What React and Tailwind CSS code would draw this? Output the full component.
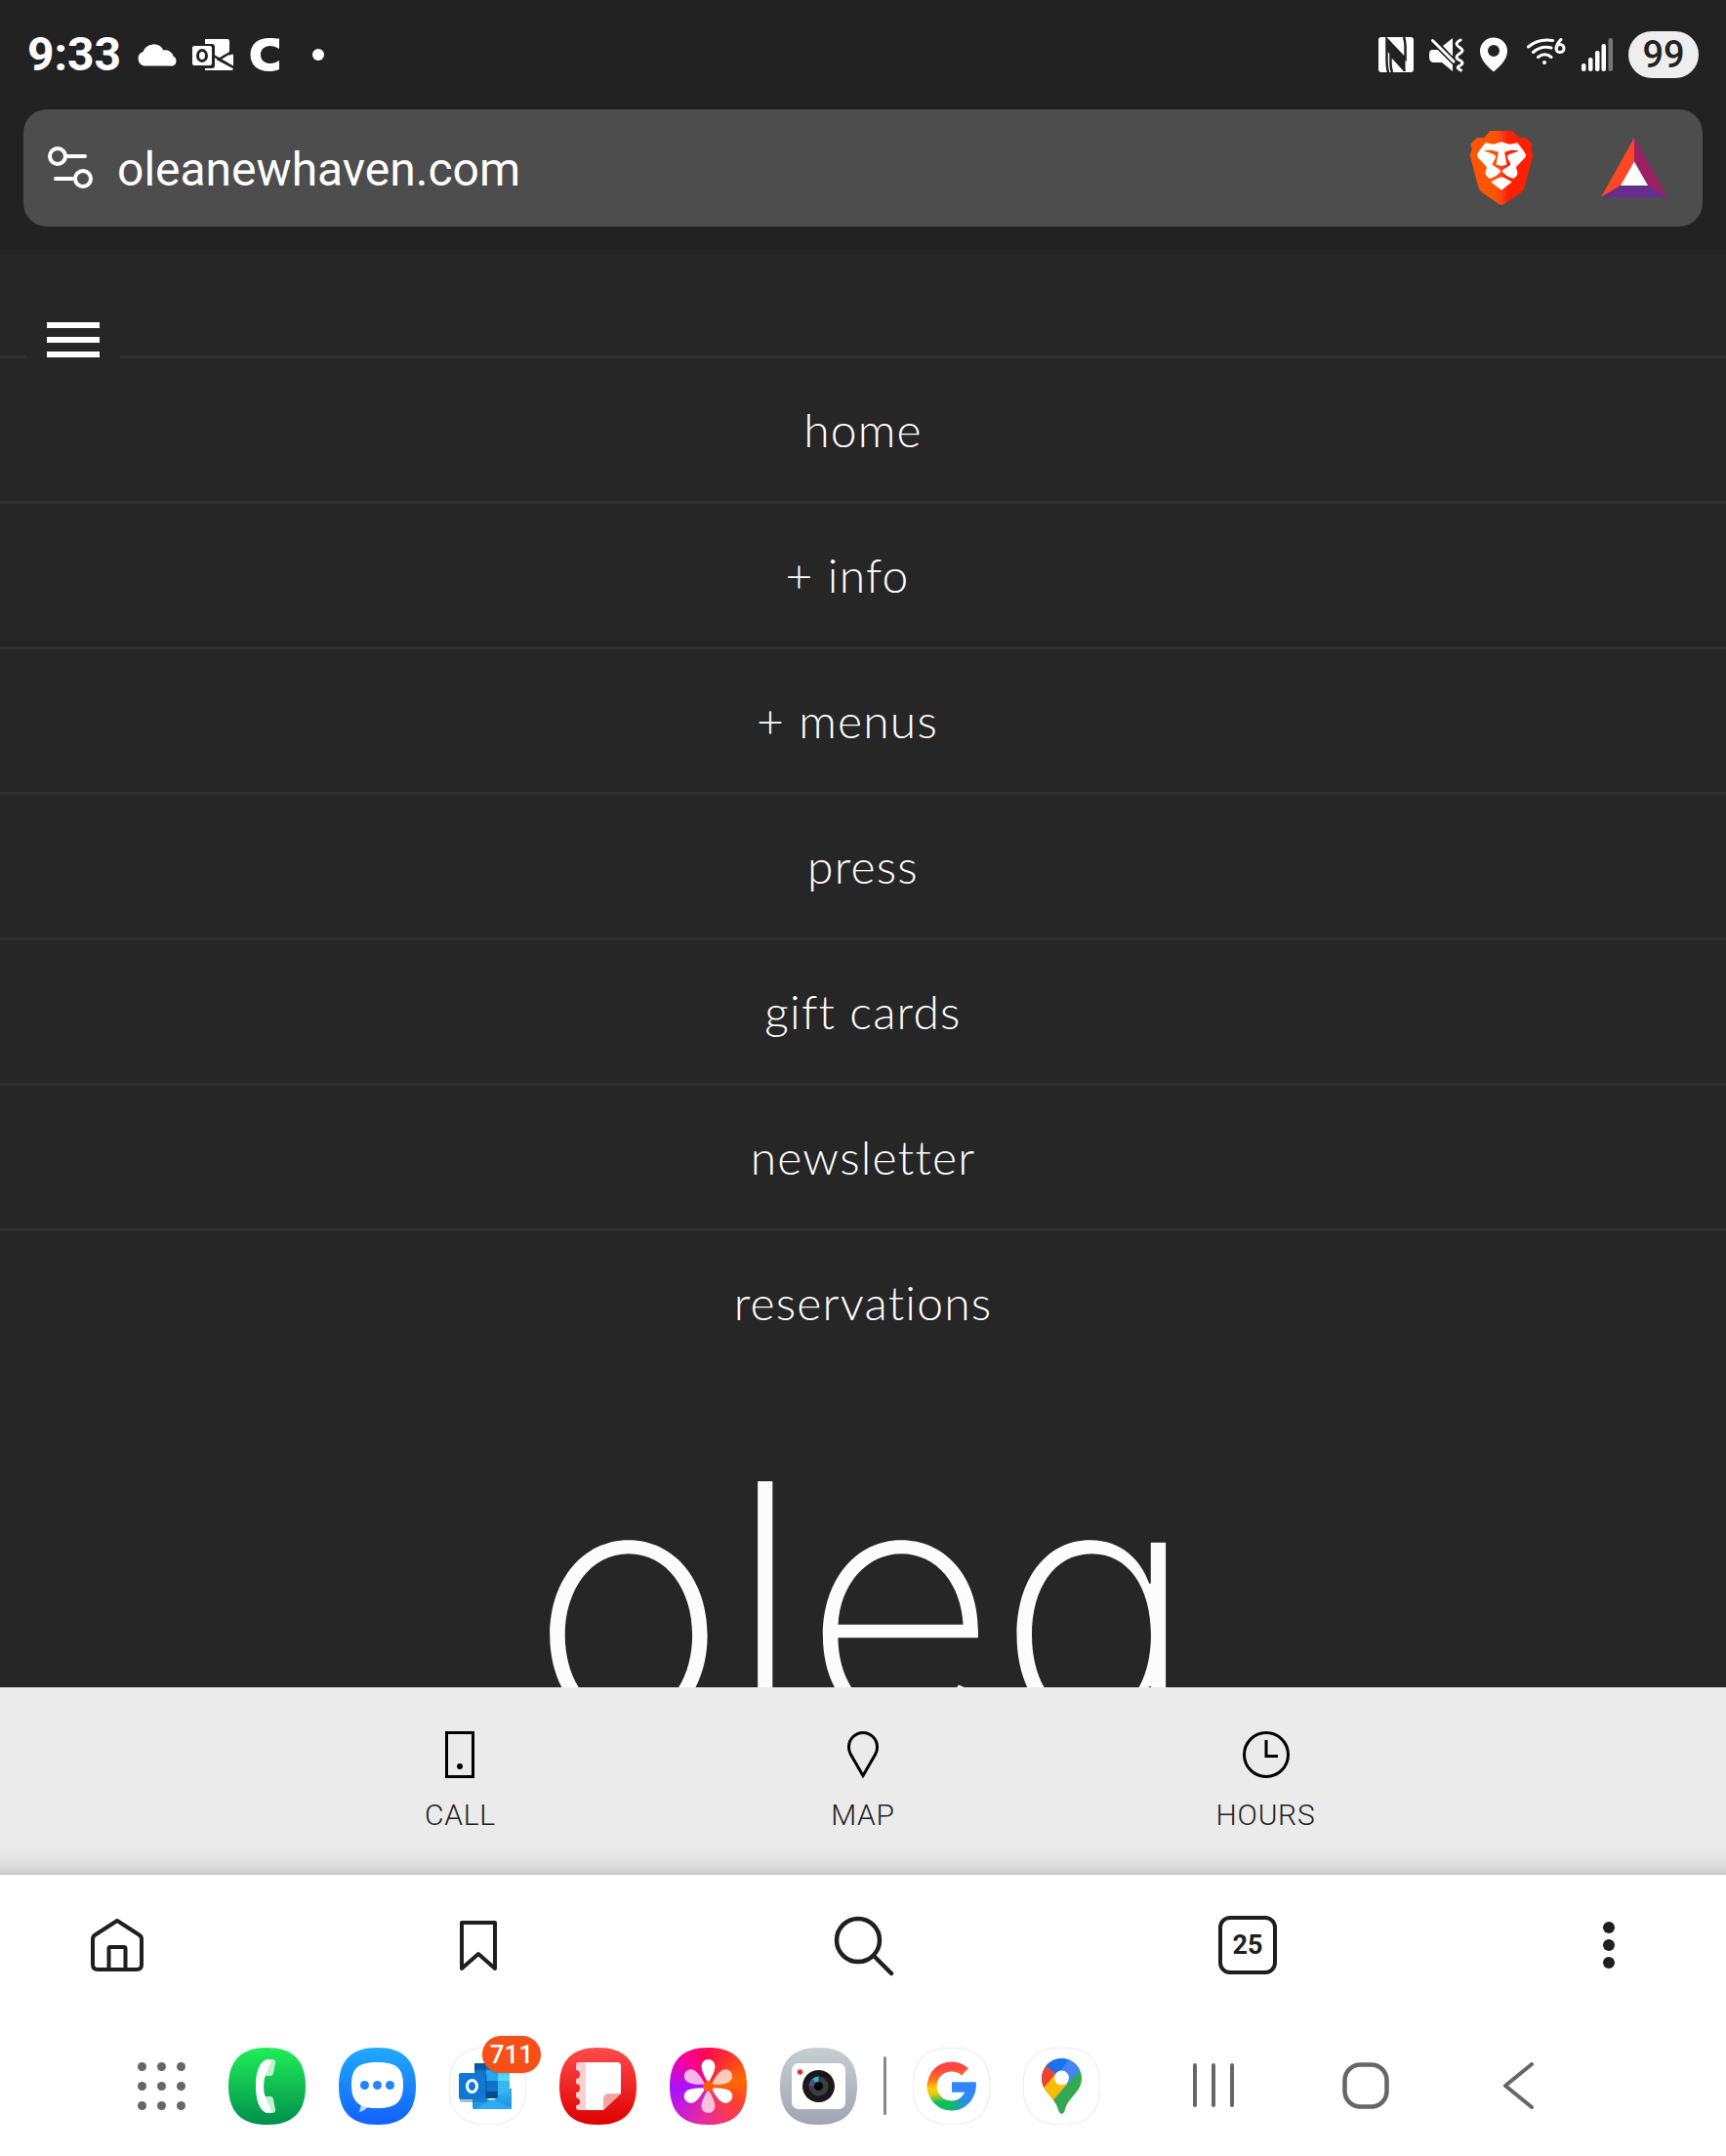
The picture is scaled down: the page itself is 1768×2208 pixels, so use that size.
import React from "react";
import { SiBrave } from "react-icons/si";

const SQUIRCLE = "M39.5 0C66 0 79 13 79 39.5S66 79 39.5 79 0 66 0 39.5 13 0 39.5 0Z";

/* ---------- status bar ---------- */

function StatusBar() {
  return (
    <header className="flex h-28 items-center justify-between px-7 text-white">
      <div className="flex items-center">
        <time className="font-[Roboto,sans-serif] text-[48px] leading-none font-bold">9:33</time>
        <svg className="ml-4 h-6 w-11" viewBox="0 0 44 24" fill="#fff" aria-label="Cloud">
          <path d="M8 23.500A7.500 7.500 0 0 1 6.500 9 11.500 11.500 0 0 1 27.500 7.500 8.500 8.500 0 0 1 37.500 13.500 5.500 5.500 0 0 1 37 23.500Z" />
        </svg>
        <svg className="ml-3 h-9 w-11" viewBox="0 0 44 36" aria-label="Outlook">
          <path d="M14 2h23q2 0 2 2v12l4 2v14q0 2-2 2H14Z" fill="#fff" />
          <path d="M43 14 28 23 43 31M21 18 44 31.500" stroke="#222" strokeWidth="2.500" fill="none" />
          <path d="M39 2h5v14l-5 3Z" fill="#222" />
          <rect x="-1" y="7" width="25" height="25" rx="3" fill="#222" />
          <rect x="1" y="9" width="20" height="20" rx="2" fill="#fff" />
          <ellipse cx="11" cy="19" rx="4.500" ry="5.500" fill="none" stroke="#222" strokeWidth="3" />
        </svg>
        <svg className="ml-4 h-9 w-8" viewBox="0 0 32 36" aria-label="C">
          <path d="M30 1.500V12C27 10 23.500 9 20.500 9 15 9 11 12.500 11 18s4 9 9.500 9c3.500 0 6.500-1 9.500-3V33c-3 1.500-7 2-10.500 2C8 35 0.500 28.500 0.500 18S8 1 19.500 1c4 0 7.500 .5 10.500 .5Z" fill="#fff" />
        </svg>
        <span className="ml-8 size-3 rounded-full bg-white" />
      </div>
      <div className="flex items-center gap-4">
        <svg className="size-9" viewBox="0 0 36 36" aria-label="NFC">
          <rect width="36" height="36" rx="3" fill="#fff" />
          <path d="M10 36C8.500 31 8.500 27 8.500 22V2L27.500 22V9C27.500 5 27 3 26 0M26.500 35V34L12.500 18.500V27C12.500 31 13 33 14 36" fill="none" stroke="#222" strokeWidth="2.500" />
          <path d="M8.500 2 27.500 22V34L8.500 14Z" fill="#222" />
        </svg>
        <svg className="h-9 w-9" viewBox="0 0 36 36" fill="#fff" aria-label="Vibrate">
          <path d="M3 13h6l-1-1L24 28v7L13 26H5q-5 0-5-6v-2q0-5 3-5Z" />
          <path d="M24 1v19L14 9Z" />
          <path d="M3 3 26 26" stroke="#222" strokeWidth="6" />
          <path d="M3.500 3.500 25 25" stroke="#fff" strokeWidth="3" strokeLinecap="round" />
          <path d="M32 3c-5 3-5 5-1 7.500s4 4 0 6.500-4 4.500 0 6.500 4 4 0 6 0 3.500 1.500 4.500" fill="none" stroke="#fff" strokeWidth="3" strokeLinecap="round" />
        </svg>
        <svg className="h-9 w-7" viewBox="0 0 28 36" aria-label="Location">
          <path fillRule="evenodd" fill="#fff" d="M14 .5A14 14 0 0 1 28 14.500C28 24 18 32 14 35.500 10 32 0 24 0 14.500A14 14 0 0 1 14 .5ZM14 8a6 6 0 1 0 0 12 6 6 0 0 0 0-12Z" />
        </svg>
        <svg className="ml-1 h-9 w-10" viewBox="0 0 40 36" fill="none" stroke="#fff" strokeWidth="3" strokeLinecap="round" aria-label="Wi-Fi 6">
          <path d="M1.500 10Q12 1 26.500 3.500M6.500 15.500Q14.500 8.500 25 11M11.500 20.500Q18.500 15 25 20.500" />
          <circle cx="18" cy="26" r="2" fill="#fff" stroke="none" />
          <circle cx="34" cy="11.500" r="4" />
          <path d="M35 2.500Q31 6 30.500 11" />
        </svg>
        <svg className="h-9 w-8" viewBox="0 0 32 36" fill="#fff" aria-label="Signal">
          <rect x="0" y="27" width="4.500" height="8" rx="2" />
          <rect x="7" y="21" width="4.500" height="14" rx="2" />
          <rect x="14" y="14" width="4.500" height="21" rx="2" />
          <rect x="20.500" y="7" width="4.500" height="28" rx="2" />
          <rect x="27.500" y="1" width="4.500" height="34" rx="2" fill="#777" />
        </svg>
        <span className="flex h-12 w-18 items-center justify-center rounded-full bg-[#eee] font-[Roboto,sans-serif] text-[38px] leading-none font-medium text-[#222]">
          99
        </span>
      </div>
    </header>
  );
}

/* ---------- address bar ---------- */

function AddressBar() {
  return (
    <div className="mx-6 mb-6 flex h-30 items-center rounded-3xl bg-[#4d4d4d] pl-6 pr-9">
      <button type="button" aria-label="Site settings">
        <svg className="h-12 w-12" viewBox="0 0 48 48" fill="none" stroke="#fff" strokeWidth="4" strokeLinecap="round">
          <circle cx="11" cy="12" r="8" />
          <path d="M20 12H39M9 35H26" />
          <circle cx="37" cy="35" r="8" />
        </svg>
      </button>
      <input
        type="text"
        aria-label="Address"
        defaultValue="oleanewhaven.com"
        className="ml-6 min-w-0 flex-1 bg-transparent pt-1 font-[Roboto,sans-serif] text-[48px] leading-14 text-white outline-none"
      />
      <button type="button" aria-label="Brave Shields">
        <svg className="size-[76px]" viewBox="0 0 24 24">
          <defs>
            <linearGradient id="shield" x1="0" x2="1" y1="0" y2="0">
              <stop offset="0" stopColor="#ff5500" />
              <stop offset="0.400" stopColor="#ff5500" />
              <stop offset="0.500" stopColor="#ff4020" />
              <stop offset="0.600" stopColor="#ff2000" />
              <stop offset="1" stopColor="#ff2000" />
            </linearGradient>
          </defs>
          <path d="M6 3.500 12 3l6 .5 3 5-3 9-6 4-6-4-3-9Z" fill="#fff" />
          <SiBrave width="24" height="24" size="24" fill="url(#shield)" />
        </svg>
      </button>
      <button type="button" aria-label="Brave Rewards" className="ml-16">
        <svg className="h-16 w-17" viewBox="0 0 68 64">
          <path d="M34 1V26L20 50 0 62Z" fill="#ff4724" />
          <path d="M34 1 68 62 48 50 34 26Z" fill="#9e1f63" />
          <path d="M0 62 20 50H48L68 62Z" fill="#662d91" />
          <path d="M34 25.500 20 50H48Z" fill="#fff" />
        </svg>
      </button>
    </div>
  );
}

/* ---------- site ---------- */

const MENU = [
  { label: "home" },
  { label: "info", folder: true },
  { label: "menus", folder: true },
  { label: "press" },
  { label: "gift cards" },
  { label: "newsletter" },
  { label: "reservations" },
];

function Site() {
  return (
    <main className="relative min-h-0 flex-1 overflow-hidden bg-[#262626] pt-27 text-white">
      <nav className="font-[Lato,sans-serif] text-[48px] leading-[146px] font-light tracking-wide">
        {MENU.map(({ label, folder }) => (
          <a
            key={label}
            href={"#" + label.replace(" ", "-")}
            className={"block border-t-[3px] border-[#303030] text-center " + (folder ? "pr-8" : "")}
          >
            {folder ? "+ " : ""}
            {label}
          </a>
        ))}
      </nav>
      <button
        type="button"
        aria-label="Menu"
        className="absolute top-11 left-[27px] flex size-24 flex-col items-center justify-center gap-[9px] bg-[#262626]"
      >
        <span className="h-1.5 w-[54px] bg-white" />
        <span className="h-1.5 w-[54px] bg-white" />
        <span className="h-1.5 w-[54px] bg-white" />
      </button>
      <h1 className="text-center font-[Inter,sans-serif] text-[345px] leading-[472px] font-extralight text-[#fcfcfc] [font-feature-settings:'cv11']">
        olea
      </h1>
    </main>
  );
}

function ContactBar() {
  return (
    <div className="flex h-48 shrink-0 justify-center bg-[#ebebeb] bg-[linear-gradient(to_bottom,#ebebeb_86%,#dedede_95%,#c8c8c8_100%)] font-[Roboto,sans-serif] text-[30px] leading-9 font-light tracking-wide text-[#222]">
      <div className="grid w-[70%] grid-cols-3 pt-[45px]">
        <a href="#call" className="flex flex-col items-center gap-5">
          <svg className="size-12" viewBox="0 0 48 48">
            <rect x="10.500" y="1.500" width="27" height="45" fill="none" stroke="#000" strokeWidth="3" />
            <circle cx="24" cy="36" r="3" />
          </svg>
          CALL
        </a>
        <a href="#map" className="flex flex-col items-center gap-5">
          <svg className="size-12" viewBox="0 0 48 48" fill="none" stroke="#000" strokeWidth="3">
            <path d="M24 45.500 11.300 23.500A14.500 14.500 0 0 1 9.500 16 14.500 14.500 0 0 1 38.500 16 14.500 14.500 0 0 1 36.700 23.500Z" />
          </svg>
          MAP
        </a>
        <a href="#hours" className="flex flex-col items-center gap-5">
          <svg className="size-12" viewBox="0 0 48 48" fill="none" stroke="#000" strokeWidth="3">
            <circle cx="24" cy="24" r="22.500" />
            <path d="M24 9V25.500H36" />
          </svg>
          HOURS
        </a>
      </div>
    </div>
  );
}

/* ---------- browser toolbar ---------- */

function Toolbar() {
  return (
    <div className="flex h-36 shrink-0 items-center justify-between bg-white px-24 text-[#1f1f1f]">
      <button type="button" aria-label="Home" className="flex w-12 justify-center">
        <svg className="size-15 shrink-0" viewBox="0 0 60 60" fill="none" stroke="currentColor" strokeWidth="4" strokeLinejoin="round" strokeLinecap="round">
          <path d="M30 5 52.500 19.500Q55 21 55 24V50Q55 55 50 55H10Q5 55 5 50V24Q5 21 7.500 19.500Z" />
          <path d="M21.500 55V33.500Q21.500 32 23 32H37Q38.500 32 38.500 33.500V55" />
        </svg>
      </button>
      <button type="button" aria-label="Bookmarks" className="flex w-12 justify-center">
        <svg className="size-15 shrink-0" viewBox="0 0 60 60" fill="none" stroke="currentColor" strokeWidth="4" strokeLinejoin="round">
          <path d="M13 7H47V54L30 39 13 54Z" />
        </svg>
      </button>
      <button type="button" aria-label="Search" className="flex w-24 justify-center">
        <svg className="size-16 shrink-0" viewBox="0 0 64 64" fill="none" stroke="currentColor" strokeWidth="4.500" strokeLinecap="round">
          <circle cx="27" cy="27" r="22" />
          <path d="M43 43 61 61" />
        </svg>
      </button>
      <button type="button" aria-label="25 open tabs" className="flex w-12 justify-center">
        <span className="flex size-15 shrink-0 items-center justify-center rounded-xl border-4 border-[#1f1f1f] font-[Roboto,sans-serif] text-[27px] leading-none font-bold">
          25
        </span>
      </button>
      <button type="button" aria-label="More" className="flex w-12 flex-col items-center gap-1.5">
        <span className="size-3 rounded-full bg-[#1f1f1f]" />
        <span className="size-3 rounded-full bg-[#1f1f1f]" />
        <span className="size-3 rounded-full bg-[#1f1f1f]" />
      </button>
    </div>
  );
}

/* ---------- dock ---------- */

function DockApp({ label, badge, children }) {
  return (
    <button type="button" aria-label={label} className="relative shrink-0">
      <svg className="size-[79px]" viewBox="0 0 79 79">
        {children}
      </svg>
      {badge && (
        <span className="absolute -top-3 left-[34px] flex h-[38px] w-15 items-center justify-center rounded-full bg-[#f64f17] font-[Roboto,sans-serif] text-[26px] leading-none font-medium text-white shadow-sm">
          {badge}
        </span>
      )}
    </button>
  );
}

function Gradient({ id, from, to }) {
  return (
    <linearGradient id={id} x1="0" y1="0" x2="0" y2="1">
      <stop offset="0" stopColor={from} />
      <stop offset="1" stopColor={to} />
    </linearGradient>
  );
}

const PETAL = "M39.500 36C35 29 32.500 23 32.500 19A7 7 0 0 1 46.500 19C46.500 23 44 29 39.500 36Z";

function Dock() {
  return (
    <div className="flex h-36 shrink-0 items-center bg-white pl-[141px]">
      <button type="button" aria-label="All apps" className="grid grid-cols-3 gap-[11px]">
        {[0, 1, 2, 3, 4, 5, 6, 7, 8].map((n) => (
          <span key={n} className="size-[9px] rounded-full bg-[#666]" />
        ))}
      </button>
      <div className="ml-11 flex items-center gap-[34px]">
        <DockApp label="Phone">
          <Gradient id="phone" from="#20ee58" to="#008f4c" />
          <path d={SQUIRCLE} fill="url(#phone)" />
          <path d="M38 12H44Q49 12 48 16L46 26Q45.500 29 43 29H37Z M37 50H43Q45.500 50 46 53L48 63Q49 67 44 67H38Z" fill="#c2f1d0" />
          <path d="M41 12Q45 12 43.500 15L38 28Q36 33 36 39.500T38 51L43.500 64Q45 67 41 67C31 66 28 52 28 39.500S31 13 41 12Z" fill="#fff" />
        </DockApp>
        <DockApp label="Messages">
          <Gradient id="msg" from="#20aafc" to="#1260fd" />
          <path d={SQUIRCLE} fill="url(#msg)" />
          <path d="M23 58 21 66Q26 65 31 60Z" fill="#b9d6ff" />
          <path d="M39.500 15C59 15 66 21 66 38S59 62 39.500 62 13 55 13 38 20 15 39.500 15Z" fill="#fff" />
          <g fill="#2186fc">
            <circle cx="26.500" cy="38.500" r="4.500" />
            <circle cx="39.500" cy="38.500" r="4.500" />
            <circle cx="52.500" cy="38.500" r="4.500" />
          </g>
        </DockApp>
        <DockApp label="Outlook" badge="711">
          <Gradient id="mail" from="#38b6f0" to="#1c8fe0" />
          <path d={SQUIRCLE} fill="#fff" stroke="#e8e8e8" />
          <rect x="26" y="16" width="36" height="36" rx="2" fill="#1272c8" />
          <path d="M26 16H38V23H26Z" fill="#0358a7" />
          <path d="M38 23H62V34H38Z" fill="#28a8ea" />
          <path d="M50 23H62V34H50Z" fill="#50d9ff" />
          <path d="M50 34H62V44L50 50Z" fill="#35b8f1" />
          <path d="M38 45H50V52H38Z" fill="#064a8c" />
          <path d="M24 43 44 55 64 41V61Q64 63 62 63H26Q24 63 24 61Z" fill="url(#mail)" />
          <path d="M44 53 64 62Q64 63 62 63H26Z" fill="#2eaaf0" />
          <rect x="11" y="27" width="28" height="29" rx="2" fill="#0a4d8c" opacity="0.350" />
          <rect x="10" y="26" width="27" height="27" rx="2" fill="#1078d4" />
          <ellipse cx="23.500" cy="39.500" rx="5" ry="6" fill="none" stroke="#fff" strokeWidth="3" />
        </DockApp>
        <DockApp label="Notes">
          <Gradient id="notes" from="#ff4b4b" to="#dd0000" />
          <path d={SQUIRCLE} fill="url(#notes)" />
          <path d="M27 15V64H20Q17 64 17 61V59Q21 59 21 55.500T17 51V46Q21 46 21 41.500T17 37V32Q21 32 21 27.500T17 23V18Q17 15 20 15Z" fill="#fdd0d0" />
          <path d="M27 15H59Q63 15 63 19V47L45 64H27Z" fill="#fff" />
          <path d="M45 64V53Q45 47 51 47H63Z" fill="#f7a3a3" />
        </DockApp>
        <DockApp label="Gallery">
          <defs>
            <clipPath id="squircle">
              <path d={SQUIRCLE} />
            </clipPath>
          </defs>
          <foreignObject width="79" height="79" clipPath="url(#squircle)">
            <div className="size-full bg-[conic-gradient(#ff0a50,#ff6a00_80deg,#ff4030_120deg,#e82aa0_190deg,#a812ff_265deg,#ff0090_325deg,#ff0a50)]" />
          </foreignObject>
          <g fill="#fff">
            <path d={PETAL} />
            <path d={PETAL} transform="rotate(120 39.500 39.500)" />
            <path d={PETAL} transform="rotate(240 39.500 39.500)" />
          </g>
          <g fill="#fff" opacity="0.700">
            <path d={PETAL} transform="rotate(60 39.500 39.500)" />
            <path d={PETAL} transform="rotate(180 39.500 39.500)" />
            <path d={PETAL} transform="rotate(300 39.500 39.500)" />
          </g>
          <circle cx="39.500" cy="39.500" r="5.500" fill="#ff5a08" />
        </DockApp>
        <DockApp label="Camera">
          <Gradient id="cam" from="#c6cfd1" to="#a1a4b3" />
          <path d={SQUIRCLE} fill="url(#cam)" />
          <rect x="12" y="16" width="55" height="47" rx="7" fill="#fff" />
          <circle cx="20.500" cy="25" r="2.800" fill="#e63535" />
          <circle cx="39.500" cy="39.500" r="16.500" fill="#19191b" />
          <circle cx="39.500" cy="39.500" r="10" fill="#3d3d40" />
          <path d="M39.500 39.500V29.500A10 10 0 0 0 33 32Z" fill="#2ab5c8" />
          <path d="M39.500 39.500 33 32A10 10 0 0 0 29.500 39.500Z" fill="#5b4a8c" />
          <circle cx="39.500" cy="39.500" r="4.500" fill="#000" />
        </DockApp>
      </div>
      <div className="mx-[27px] h-15 w-[3px] rounded-full bg-[#888]" />
      <div className="flex items-center gap-[34px]">
        <DockApp label="Google">
          <defs>
            <linearGradient id="g1" gradientUnits="userSpaceOnUse" x1="34" y1="14" x2="40" y2="65">
              <stop offset="0.150" stopColor="#ff4641" />
              <stop offset="0.350" stopColor="#fd7a20" />
              <stop offset="0.500" stopColor="#ffcc00" />
              <stop offset="0.620" stopColor="#e0cc10" />
              <stop offset="0.800" stopColor="#0ebc5f" />
            </linearGradient>
            <linearGradient id="g2" gradientUnits="userSpaceOnUse" x1="38" y1="0" x2="56" y2="0">
              <stop offset="0" stopColor="#0ebc5f" />
              <stop offset="1" stopColor="#3186ff" />
            </linearGradient>
          </defs>
          <path d={SQUIRCLE} fill="#fff" stroke="#e8e8e8" />
          <g fill="none" strokeWidth="10">
            <path d="M39.500 59.500A20 20 0 0 0 59.500 40.500H40" stroke="url(#g2)" />
            <path d="M53.500 25A20 20 0 1 0 40 59.500" stroke="url(#g1)" />
          </g>
          <path d="M40 35.500H64.500Q65 40 64 45.500H40Z" fill="#3186ff" />
        </DockApp>
        <DockApp label="Maps">
          <defs>
            <clipPath id="pin">
              <path d="M39.500 11A20.500 20.500 0 0 1 60 31.500C60 46 46 50 42.500 65Q41.500 68 39.500 68T36.500 65C33 50 19 46 19 31.500A20.500 20.500 0 0 1 39.500 11Z" />
            </clipPath>
          </defs>
          <path d={SQUIRCLE} fill="#fff" stroke="#e8e8e8" />
          <g clipPath="url(#pin)">
            <rect width="79" height="79" fill="#34a853" />
            <path d="M0 62 39 18 60 10 55 26 28 57 0 75Z" fill="#fbbc04" />
            <path d="M0 0H25L34 26 12 52Z" fill="#ea4335" />
            <path d="M10 10 24 19 36 29 52 8Z" fill="#1a73e8" />
            <path d="M35 28 50 8 66 10 61 20 46 37Z" fill="#4285f4" />
          </g>
          <circle cx="39.500" cy="31" r="7.500" fill="#fff" />
        </DockApp>
      </div>
      <div className="ml-[92px] flex items-center gap-27 text-[#666]">
        <button type="button" aria-label="Recent apps">
          <svg className="size-12" viewBox="0 0 48 48" stroke="currentColor" strokeWidth="4" strokeLinecap="round">
            <path d="M5 3V44M24 3V44M43 3V44" />
          </svg>
        </button>
        <button type="button" aria-label="Home screen">
          <svg className="size-12" viewBox="0 0 48 48" fill="none" stroke="currentColor" strokeWidth="4.500">
            <rect x="2.500" y="2.500" width="43" height="43" rx="16" />
          </svg>
        </button>
        <button type="button" aria-label="Back">
          <svg className="size-12" viewBox="0 0 48 48" fill="none" stroke="currentColor" strokeWidth="4" strokeLinecap="round" strokeLinejoin="round">
            <path d="M38 2 11 24 38 46" />
          </svg>
        </button>
      </div>
    </div>
  );
}

export default function App() {
  return (
    <div className="flex h-screen flex-col overflow-hidden bg-[#222]">
      <StatusBar />
      <AddressBar />
      <Site />
      <ContactBar />
      <Toolbar />
      <Dock />
    </div>
  );
}
